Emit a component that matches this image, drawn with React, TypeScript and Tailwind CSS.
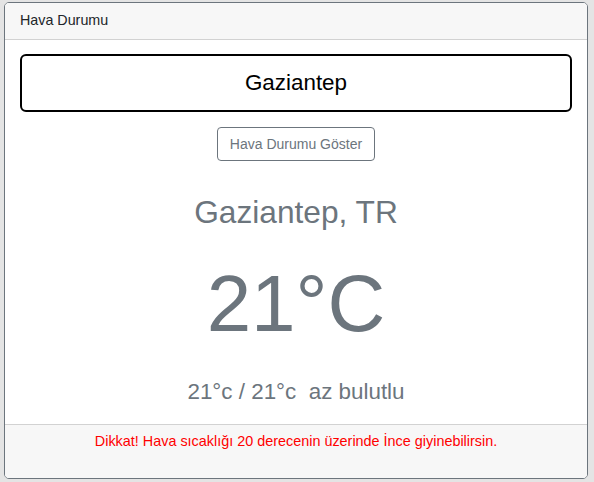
import React, { useEffect, useRef } from "react";

export default function App() {
  const ref = useRef<HTMLInputElement>(null);
  useEffect(() => {
    const el = ref.current;
    if (el) {
      el.focus();
      const n = el.value.length;
      el.setSelectionRange(n, n);
    }
  }, []);
  return (
    <div
      className="min-h-[482px] bg-[#e4e4e4] pl-[4px] pt-[2px]"
      style={{ fontFamily: '"Liberation Sans", Arial, sans-serif' }}
    >
      <div className="flex h-[477px] w-[584px] flex-col overflow-hidden rounded-[5px] border border-[#6c757d] bg-white">
        <div className="flex h-[37px] items-center border-b border-[#d2d2d2] bg-[#f7f7f7] px-[15px] text-[14.3px] text-[#212529]">
          Hava Durumu
        </div>
        <div className="flex flex-1 flex-col items-center px-[15px] pt-[14px]">
          <input
            ref={ref}
            defaultValue="Gaziantep"
            className="h-[58px] w-full rounded-[6px] border-2 border-black bg-white text-center text-[22.4px] text-black caret-black outline-none"
          />
          <button className="mt-[15px] h-[34px] rounded-[4px] border border-[#6c757d] bg-white px-[12px] text-[14px] text-[#6c757d]">
            Hava Durumu Göster
          </button>
          <div className="mt-[32px] text-[31.7px] leading-[38px] text-[#6c757d]">Gaziantep, TR</div>
          <div className="mt-[25px] text-[80px] leading-[96px] text-[#6c757d]">21°C</div>
          <div className="mt-[23px] whitespace-pre text-[22.4px] leading-[33.6px] text-[#6c757d]">
            21°c / 21°c  az bulutlu
          </div>
        </div>
        <div className="h-[54px] border-t border-[#d2d2d2] bg-[#f7f7f7] pt-[6px] text-center text-[14.4px] leading-[21.6px] text-[#ff0000]">
          Dikkat! Hava sıcaklığı 20 derecenin üzerinde İnce giyinebilirsin.
        </div>
      </div>
    </div>
  );
}
